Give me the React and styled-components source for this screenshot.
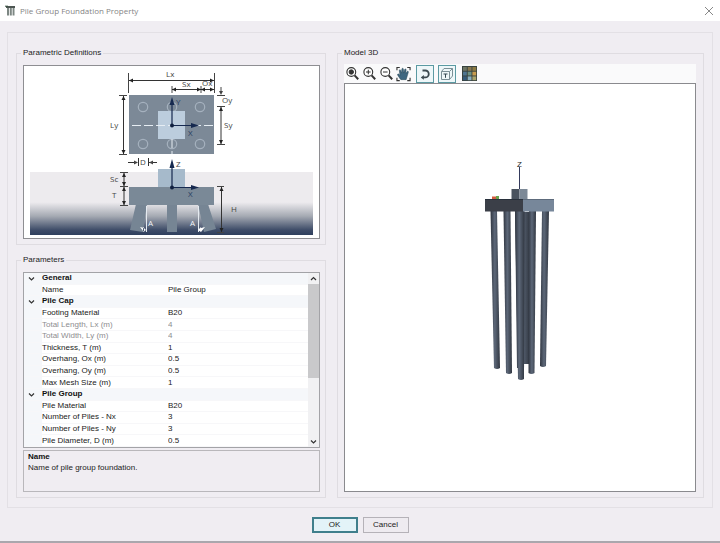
/**
 *
 * PileGroupDialog
 *
 */

import React from 'react'
import styled, { createGlobalStyle } from 'styled-components'

const GlobalStyle = createGlobalStyle`
  *, *::before, *::after {
    box-sizing: border-box;
  }

  body {
    margin: 0;
    background: #f0edf2;
    color: #222;
    font-family: 'Liberation Sans', Arial, sans-serif;
    font-size: 8px;
    line-height: 10px;
  }
`

const Window = styled.div`
  display: flex;
  flex-direction: column;
  min-height: 100vh;
  border-bottom: 2px solid #aaa7ad;
`

const TitleBar = styled.header`
  display: flex;
  align-items: center;
  gap: 4px;
  height: 21px;
  padding: 0 5px;
  background: #fff;
`

const Title = styled.h1`
  flex: 1;
  margin: 0;
  color: #858585;
  font-family: 'Open Sans', 'Noto Sans', sans-serif;
  font-size: 8px;
  font-weight: 400;
`

const IconButton = styled.button`
  display: flex;
  align-items: center;
  justify-content: center;
  width: ${props => props.$size}px;
  height: ${props => props.$size}px;
  padding: 0;
  border: 1px solid ${props => props.$active ? '#5b9aa3' : 'transparent'};
  background: ${props => props.$active ? '#eef7f9' : 'transparent'};
  color: #333;
`

const Panel = styled.main`
  display: grid;
  flex: 1;
  grid-template-columns: minmax(0, 310fr) minmax(0, 367fr);
  gap: 11px;
  margin: 11px 7px 0;
  padding: 15px 8px 9px;
  border: 1px solid #e3e0e5;
`

const Column = styled.div`
  display: flex;
  flex-direction: column;
  gap: 10px;
`

const Group = styled.fieldset`
  display: flex;
  flex: ${props => props.$grow ? 1 : 'none'};
  flex-direction: column;
  min-width: 0;
  margin: 0;
  padding: 7px 5px 5px 6px;
  border: 1px solid #dfdce1;

  & > legend {
    margin-left: -2px;
    padding: 0 2px;
    line-height: 10px;
  }
`

const DiagramFrame = styled.div`
  border: 1px solid #8e8e92;
  background: #fff;

  & > svg {
    display: block;
    width: 100%;
    height: auto;
  }
`

const PropertyGrid = styled.div`
  display: flex;
  flex: 1;
  border: 1px solid #a3a3a7;
  background: #fff;
`

const PropertyTable = styled.table`
  flex: 1;
  width: 100%;
  border-collapse: collapse;
  table-layout: fixed;
  line-height: 10px;

  & td, & th {
    padding: 0;
    border-bottom: 1px solid #f7f7f9;
    font-weight: 400;
    text-align: left;
    white-space: nowrap;
  }
`

const GutterCol = styled.col`
  width: 18px;
`

const NameCol = styled.col`
  width: 126px;
`

const Row = styled.tr`
  color: ${props => props.$muted ? '#8d8d8f' : '#222'};

  & > td:first-child {
    background: #f5f7fa;
  }
`

const CategoryRow = styled.tr`
  background: #f5f7fa;
  color: #111;

  && th {
    font-weight: 700;
  }
`

const Toggle = styled.button`
  display: block;
  height: 10px;
  padding: 0 0 0 4px;
  border: 0;
  background: none;
  color: #444;

  & > svg {
    display: block;
  }
`

const ValueInput = styled.input`
  display: block;
  width: 100%;
  height: 10px;
  padding: 0;
  border: 0;
  background: none;
  color: inherit;
  font: inherit;
`

const ScrollBar = styled.div`
  display: flex;
  flex-direction: column;
  width: 11px;
  background: #f1f1f3;
`

const ScrollTrack = styled.div`
  flex: 1;
`

const ScrollThumb = styled.div`
  height: 62%;
  background: #c9c9cb;
`

const Description = styled.div`
  height: 42px;
  margin-top: 2px;
  padding: 1px 4px;
  border: 1px solid #b9b7bb;

  & > h2 {
    margin: 0 0 1px;
    color: #111;
    font-size: 8px;
    line-height: 10px;
  }

  & > p {
    margin: 0;
  }
`

const ModelGroup = styled(Group)`
  padding-top: 6px;
  padding-right: 7px;
`

const ToolBar = styled.div`
  display: flex;
  align-items: center;
  height: 19px;
  background: #fafafb;
`

const ToolSet = styled.div`
  display: flex;
  gap: ${props => props.$gap}px;
  padding-left: ${props => props.$indent}px;
`

const ModelView = styled.div`
  display: flex;
  flex: 1;
  align-items: center;
  justify-content: center;
  border: 1px solid #8a8a8e;
  background: #fff;

  & > svg {
    display: block;
    width: 100%;
    height: auto;
  }
`

const Footer = styled.footer`
  display: flex;
  justify-content: center;
  gap: 5px;
  padding: 9px 0 8px;
`

const DialogButton = styled.button`
  width: 46px;
  height: 16px;
  padding: 0;
  border: ${props => props.$primary ? '2px solid #3f7f8c' : '1px solid #b5b2b8'};
  background: ${props => props.$primary ? '#e3f3f8' : '#eeebf0'};
  color: #222;
  font: inherit;
`

const sections = [
  {
    title: 'General',
    rows: [{ name: 'Name', value: 'Pile Group' }]
  },
  {
    title: 'Pile Cap',
    rows: [
      { name: 'Footing Material', value: 'B20' },
      { name: 'Total Length, Lx (m)', value: '4', muted: true },
      { name: 'Total Width, Ly (m)', value: '4', muted: true },
      { name: 'Thickness, T (m)', value: '1' },
      { name: 'Overhang, Ox (m)', value: '0.5' },
      { name: 'Overhang, Oy (m)', value: '0.5' },
      { name: 'Max Mesh Size (m)', value: '1' }
    ]
  },
  {
    title: 'Pile Group',
    rows: [
      { name: 'Pile Material', value: 'B20' },
      { name: 'Number of Piles - Nx', value: '3' },
      { name: 'Number of Piles - Ny', value: '3' },
      { name: 'Pile Diameter, D (m)', value: '0.5' }
    ]
  }
]

const PileIcon = () => (
  <svg width='11' height='11' viewBox='0 0 11 11'>
    <path d='M1 1h9v2H1z' fill='#4d5552' />
    <path d='M2 3h2v7.500H2zM4.800 3h2v7.500h-2zM7.600 3h1.900v7.500H7.600z' fill='#7d8783' />
    <path d='M0 1.200h3' stroke='#36503f' />
  </svg>
)

const Chevron = ({ up }) => (
  <svg width='7' height='9' viewBox='0 0 7 9'>
    <path d={up ? 'M1 6l2.5-2.5L6 6' : 'M1 3.5L3.5 6 6 3.5'} fill='none' stroke='#333' strokeWidth='1.2' />
  </svg>
)

const Magnifier = ({ children }) => (
  <svg width='15' height='15' viewBox='0 0 15 15' fill='none' stroke='#333'>
    <circle cx='6.3' cy='6' r='4.4' fill='#fff' strokeWidth='1.1' />
    <path d='M9.6 9.4l3.6 3.8' strokeWidth='2' />
    {children}
  </svg>
)

const HandIcon = () => (
  <svg width='16' height='16' viewBox='0 0 16 16'>
    <path d='M1 4V1h3M12 1h3v3M15 12v3h-3M4 15H1v-3' fill='none' stroke='#333' strokeWidth='1.2' />
    <path
      d='M4.3 13L1.8 9.2c-.6-1.1.7-1.7 1.4-.9l1 1L3.5 4.4c-.1-1.2 1.2-1.4 1.5-.3l.9 3L6.2 2.8c.1-1.2 1.6-1.2 1.7 0L8.2 7l1-3.7c.3-1.1 1.7-.8 1.6.3l-.4 3.9 1.3-2c.7-1 1.9-.3 1.4.8L12 10l-1.2 4H5.2z'
      fill='#3f6780'
      stroke='#274452'
      strokeWidth='.5'
    />
  </svg>
)

const RotateIcon = () => (
  <svg width='14' height='14' viewBox='0 0 14 14'>
    <path d='M4.500 3.500h2.800a3.400 3.400 0 0 1 0 6.900H5' fill='none' stroke='#3b4a50' strokeWidth='1.800' />
    <path d='M5.800 8v4.800L2.800 10.400z' fill='#3b4a50' />
  </svg>
)

const CubeIcon = () => (
  <svg width='14' height='14' viewBox='0 0 14 14' fill='none' stroke='#7b8f96' strokeLinejoin='round'>
    <path d='M1.500 4.500l2.500-3h8.500v7.500l-3 3.500h-8zM1.500 4.500h8v8M9.500 4.500l3-3' />
    <path d='M3.500 7h4M5.500 7v3.800' stroke='#334750' />
  </svg>
)

const PaletteIcon = () => {
  const colors = ['#6d7463', '#877750', '#8c7a43', '#4f7590', '#6d9184', '#c79b4e', '#365b7a', '#8bb0c1', '#a9a46d']
  return (
    <svg width='15' height='15' viewBox='0 0 15 15'>
      <path d='M0 0h15v15H0z' fill='#38423f' />
      {colors.map((color, i) => (
        <rect key={i} x={1 + (i % 3) * 4.7} y={1 + Math.floor(i / 3) * 4.7} width='3.8' height='3.8' fill={color} />
      ))}
    </svg>
  )
}

// line with an arrow head at each end, as used for all the dimensions
const Dimension = ({ x1, y1, x2, y2 }) => {
  const flat = y1 === y2
  const heads = flat
    ? `M${x1} ${y1}l4-2v4zM${x2} ${y2}l-4-2v4z`
    : `M${x1} ${y1}l-2 4h4zM${x2} ${y2}l-2-4h4z`
  return (
    <g>
      <path d={`M${x1} ${y1}L${x2} ${y2}`} stroke='#333' />
      <path d={heads} fill='#222' />
    </g>
  )
}

const DiagramSvg = styled.svg`
  fill: #444;
  font-family: 'Open Sans', 'Noto Sans', sans-serif;
  font-size: 8px;
`

const Diagram = () => (
  <DiagramSvg viewBox='24 66 295 172' role='img' aria-label='Pile group dimensions'>
    <defs>
      <linearGradient id='soil' x1='0' y1='0' x2='0' y2='1'>
        <stop offset='0' stopColor='#edebee' />
        <stop offset='.48' stopColor='#edebee' />
        <stop offset='.7' stopColor='#a5aab3' />
        <stop offset='.92' stopColor='#3e4c68' />
        <stop offset='1' stopColor='#2f3f5d' />
      </linearGradient>
    </defs>
    <rect x='30' y='172' width='283' height='63' fill='url(#soil)' />

    {/* plan */}
    <rect x='129' y='95' width='85' height='59' fill='#7c8997' />
    <g fill='none' stroke='#a5b1be' strokeWidth='1.2'>
      {[107, 144].map(cy => [143, 172, 200].map(cx => <circle key={`${cx}-${cy}`} cx={cx} cy={cy} r='4.7' />))}
    </g>
    <rect x='158' y='111' width='27' height='28' fill='#bccddd' />
    <path d='M132 125.5h82M172 139v15' stroke='#e6edf3' strokeDasharray='9 3' />
    <path d='M172 125.5v-23M172 125.5h20' stroke='#16294f' strokeWidth='1.2' />
    <path d='M172 97l-2.5 8h5zM199 125.5l-8-2.5v5z' fill='#16294f' />
    <circle cx='172' cy='125.5' r='2' fill='#10203f' />
    <text x='176' y='105' fill='#263b60'>Y</text>
    <text x='188' y='136' fill='#263b60'>X</text>

    <path d='M128.5 73v20M214.5 73v20M172 86v7M201 86v7' stroke='#444' />
    <Dimension x1={129} y1={80.5} x2={214} y2={80.5} />
    <Dimension x1={172} y1={89.5} x2={201} y2={89.5} />
    <Dimension x1={201} y1={89.5} x2={214} y2={89.5} />
    <path d='M119 95.5h8M119 154.5h8' stroke='#444' />
    <Dimension x1={123.5} y1={96} x2={123.5} y2={154} />
    <path d='M217 95.5h8M217 106.5h8M217 144.5h8M221 87v6' stroke='#444' />
    <path d='M221 95l-2-4h4z' />
    <Dimension x1={221} y1={107} x2={221} y2={144} />
    <text x='166' y='77'>Lx</text>
    <text x='182' y='87'>Sx</text>
    <text x='202' y='86'>Ox</text>
    <text x='110' y='128'>Ly</text>
    <text x='222' y='103'>Oy</text>
    <text x='224' y='128'>Sy</text>

    {/* elevation */}
    <rect x='158' y='169' width='27' height='18' fill='#a6bacb' />
    <path d='M136 204h11l-4 28-13-2zM167 204h10v28h-10zM198 204h10l8 25-12 3z' fill='#768594' />
    <rect x='129' y='187' width='85' height='18' fill='#7a8997' />
    <path d='M172 187v-20M172 187.5h20' stroke='#16294f' strokeWidth='1.2' />
    <path d='M172 159l-2.5 9h5zM199 187.5l-8-2.5v5z' fill='#16294f' />
    <circle cx='172' cy='187.5' r='2' fill='#10203f' />
    <text x='176' y='167'>Z</text>
    <text x='188' y='197' fill='#263b60'>X</text>
    <path d='M128 162.500h8M149 162.500h8M138.500 158v8M148.500 158v8' stroke='#333' />
    <path d='M138 162.500l-4-2v4zM149 162.500l4-2v4z' />
    <text x='140' y='165'>D</text>
    <path d='M120 172.500h8M120 186.500h8M120 205.500h8' stroke='#444' />
    <Dimension x1={124} y1={173} x2={124} y2={186} />
    <Dimension x1={124} y1={187} x2={124} y2={205} />
    <text x='110' y='182'>Sc</text>
    <text x='112' y='198'>T</text>
    <path d='M217 186.500h7M217 232.500h7' stroke='#444' />
    <Dimension x1={221.5} y1={187} x2={221.5} y2={232} />
    <text x='231' y='212'>H</text>
    <path d='M146.500 206v26M198.500 206v26' stroke='#e4eaf0' />
    <path d='M140 227l4 1v4zM146 230l-3-3v5zM198 230l3-3v5zM205 227l-4 1v4z' fill='#fff' />
    <text x='148' y='226' fill='#f2f5f8'>A</text>
    <text x='190' y='226' fill='#f2f5f8'>A</text>
  </DiagramSvg>
)

const Model = () => (
  <svg viewBox='345 84 350 406' role='img' aria-label='Pile group model'>
    <defs>
      <linearGradient id='pile'>
        <stop offset='0' stopColor='#303641' />
        <stop offset='.45' stopColor='#5d6879' />
        <stop offset='1' stopColor='#303640' />
      </linearGradient>
    </defs>
    <g fill='url(#pile)'>
      <path d='M515 211h5l1 156h-4zM524 211h6l-1 152h-5z' />
      <path d='M490.500 210h6.500l3 157q-3 2-6 0z' />
      <path d='M503.500 210h7l1.500 162q-3 2-6 0z' />
      <path d='M542 210h7l-3 155q-3 2-6 0z' />
      <path d='M529 210h7l-1.500 162q-3 2-6 0z' />
      <path d='M515 210h9.500l-.500 168q-3 2-6 0z' />
    </g>
    <path d='M485 198.500h38v12h-38z' fill='#3b3f48' />
    <path d='M523 198.500h31v12h-31z' fill='#77879a' />
    <path d='M485 198.500h38' stroke='#28303b' />
    <path d='M523 198.500h31' stroke='#5d6b7c' />
    <path d='M511.500 188h8v10h-8z' fill='#4a535f' />
    <path d='M519.500 188h8v10h-8z' fill='#7c8997' />
    <path d='M519.500 166v22' stroke='#343a5c' />
    <path d='M492 195.500h4v2.500h-4z' fill='#d45a3e' />
    <path d='M496 195h3v3h-3z' fill='#68a34c' />
    <text x='517' y='166' fontSize='8' fill='#222'>Z</text>
  </svg>
)

const Properties = () => (
  <PropertyTable>
    <colgroup>
      <GutterCol />
      <NameCol />
      <col />
    </colgroup>
    <tbody>
      {sections.map(section => (
        <React.Fragment key={section.title}>
          <CategoryRow>
            <td><Toggle type='button' aria-label={`Collapse ${section.title}`}><Chevron /></Toggle></td>
            <th colSpan={2} scope='rowgroup'>{section.title}</th>
          </CategoryRow>
          {section.rows.map(row => (
            <Row key={row.name} $muted={row.muted}>
              <td />
              <th scope='row'><label htmlFor={row.name}>{row.name}</label></th>
              <td><ValueInput id={row.name} defaultValue={row.value} readOnly={row.muted} /></td>
            </Row>
          ))}
        </React.Fragment>
      ))}
    </tbody>
  </PropertyTable>
)

export default class App extends React.PureComponent {
  render () {
    return (
      <Window>
        <GlobalStyle />
        <TitleBar>
          <PileIcon />
          <Title>Pile Group Foundation Property</Title>
          <IconButton type='button' $size={12} aria-label='Close'>
            <svg width='8' height='8' viewBox='0 0 8 8'>
              <path d='M0 0l8 8M8 0L0 8' stroke='#888' />
            </svg>
          </IconButton>
        </TitleBar>
        <Panel>
          <Column>
            <Group>
              <legend>Parametric Definitions</legend>
              <DiagramFrame><Diagram /></DiagramFrame>
            </Group>
            <Group $grow>
              <legend>Parameters</legend>
              <PropertyGrid>
                <Properties />
                <ScrollBar>
                  <IconButton type='button' $size={11} aria-label='Scroll up'><Chevron up /></IconButton>
                  <ScrollTrack><ScrollThumb /></ScrollTrack>
                  <IconButton type='button' $size={11} aria-label='Scroll down'><Chevron /></IconButton>
                </ScrollBar>
              </PropertyGrid>
              <Description>
                <h2>Name</h2>
                <p>Name of pile group foundation.</p>
              </Description>
            </Group>
          </Column>
          <ModelGroup>
            <legend>Model 3D</legend>
            <ToolBar>
              <ToolSet $gap={0} $indent={0}>
                <IconButton type='button' $size={17} aria-label='Zoom extents'>
                  <Magnifier><circle cx='6.3' cy='6' r='2.2' fill='#333' /></Magnifier>
                </IconButton>
                <IconButton type='button' $size={17} aria-label='Zoom in'>
                  <Magnifier><path d='M4 6h4.600M6.300 3.700v4.600' /></Magnifier>
                </IconButton>
                <IconButton type='button' $size={17} aria-label='Zoom out'>
                  <Magnifier><path d='M4 6h4.600' /></Magnifier>
                </IconButton>
                <IconButton type='button' $size={17} aria-label='Pan'><HandIcon /></IconButton>
              </ToolSet>
              <ToolSet $gap={4} $indent={4}>
                <IconButton type='button' $size={18} $active aria-label='Rotate'><RotateIcon /></IconButton>
                <IconButton type='button' $size={18} $active aria-label='View cube'><CubeIcon /></IconButton>
                <IconButton type='button' $size={18} aria-label='Colors'><PaletteIcon /></IconButton>
              </ToolSet>
            </ToolBar>
            <ModelView><Model /></ModelView>
          </ModelGroup>
        </Panel>
        <Footer>
          <DialogButton type='submit' $primary>OK</DialogButton>
          <DialogButton type='button'>Cancel</DialogButton>
        </Footer>
      </Window>
    )
  }
}
